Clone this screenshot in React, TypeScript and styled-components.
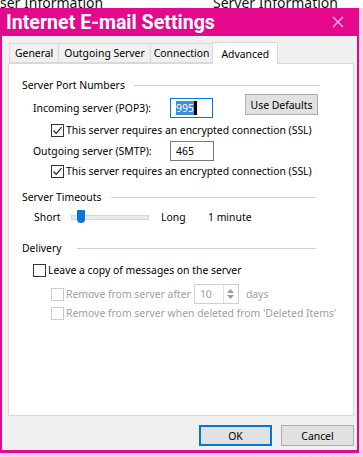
import React from "react";
import styled, { createGlobalStyle } from "styled-components";

const Global = createGlobalStyle`
  html, body { margin: 0; padding: 0; background: #ffffff; }
  body { font-family: "Noto Sans", "Open Sans", sans-serif; font-size: 10.4px; color: #000; }
  * { box-sizing: border-box; }
`;

const Page = styled.div`
  width: 363px;
  height: 457px;
  overflow: hidden;
  display: flex;
  flex-direction: column;
  background: #f6d3e7;
`;

const BackStrip = styled.div<{ $h: number; $bg: string }>`
  height: ${(p) => p.$h}px;
  flex: none;
  display: flex;
  overflow: hidden;
  background: ${(p) => p.$bg};
  font-family: "Noto Sans", sans-serif;
  font-size: 14px;
  line-height: 18px;
  color: #111;
  white-space: nowrap;
`;

const BackText = styled.span<{ $w: number; $shift: number }>`
  width: ${(p) => p.$w}px;
  flex: none;
  margin-top: ${(p) => p.$shift}px;
  height: 18px;
`;

const Window = styled.div`
  width: 359px;
  height: 445px;
  flex: none;
  display: flex;
  flex-direction: column;
  background: #e3088c;
  padding: 0 2px 3px 2px;
`;

const TitleBar = styled.div`
  height: 28px;
  flex: none;
  display: flex;
  align-items: center;
  justify-content: space-between;
  padding: 0 13px 0 4px;
  color: #fff;
  font-family: Roboto, "Noto Sans", sans-serif;
  font-size: 19.6px;
  font-weight: 700;
`;

const Body = styled.div`
  flex: 1;
  background: #f0f0f0;
  display: flex;
  flex-direction: column;
  padding: 6px 2px 0 6px;
`;

const TabRow = styled.div`
  display: flex;
  align-items: flex-end;
  height: 21px;
  padding-left: 2px;
  position: relative;
  z-index: 1;
`;

const Tab = styled.div<{ $active?: boolean; $pad: number }>`
  height: ${(p) => (p.$active ? 22 : 20)}px;
  padding: 0 ${(p) => p.$pad}px;
  margin-bottom: ${(p) => (p.$active ? -1 : 0)}px;
  display: flex;
  align-items: center;
  background: ${(p) => (p.$active ? "#ffffff" : "#f0f0f0")};
  border: 1px solid #d9d9d9;
  border-bottom: ${(p) => (p.$active ? "none" : "1px solid #d9d9d9")};
  margin-left: -1px;
  color: #000;
`;

const Panel = styled.div`
  height: 353px;
  width: 346px;
  flex: none;
  background: #fff;
  border: 1px solid #d9d9d9;
  display: flex;
  flex-direction: column;
  padding: 13px 0 0 13px;
`;

const GroupHeader = styled.div<{ $mt: number; $gap: number; $end: number }>`
  height: 16px;
  margin-top: ${(p) => p.$mt}px;
  display: flex;
  align-items: center;
  gap: ${(p) => p.$gap}px;
  padding-right: ${(p) => p.$end}px;
  &::after {
    content: "";
    flex: 1;
    height: 1px;
    background: #d0d0d0;
  }
`;

const Row = styled.div<{ $mt: number; $h: number; $indent: number }>`
  height: ${(p) => p.$h}px;
  margin-top: ${(p) => p.$mt}px;
  padding-left: ${(p) => p.$indent}px;
  display: flex;
  align-items: center;
`;

const Label = styled.span<{ $w?: number; $disabled?: boolean }>`
  ${(p) => (p.$w ? `width: ${p.$w}px; flex: none;` : "")}
  color: ${(p) => (p.$disabled ? "#a0a0a0" : "#000")};
  white-space: nowrap;
`;

const TextBox = styled.div<{ $focused?: boolean; $w: number }>`
  width: ${(p) => p.$w}px;
  height: 20px;
  flex: none;
  border: 1px solid ${(p) => (p.$focused ? "#0078d7" : "#7a7a7a")};
  display: flex;
  align-items: center;
  padding-left: 5px;
  background: #fff;
`;

const Selected = styled.span`
  background: #3c8fd8;
  color: #fff;
  line-height: 14px;
`;

const Caret = styled.span`
  width: 3px;
  height: 14px;
  background: #000;
`;

const Button = styled.div<{ $primary?: boolean; $w: number }>`
  width: ${(p) => p.$w}px;
  height: 21px;
  flex: none;
  background: #e1e1e1;
  border: ${(p) => (p.$primary ? "2px solid #0078d7" : "1px solid #adadad")};
  display: flex;
  align-items: center;
  justify-content: center;
  color: #000;
`;

const DefaultsButton = styled(Button)`
  margin-left: 32px;
  align-self: flex-start;
  margin-top: -4px;
`;

const Check = styled.div<{ $disabled?: boolean }>`
  width: 13px;
  height: 13px;
  flex: none;
  border: 1px solid ${(p) => (p.$disabled ? "#cccccc" : "#333333")};
  background: #fff;
  margin-right: 2px;
  display: flex;
  align-items: center;
  justify-content: center;
`;

const Slider = styled.div`
  width: 78px;
  height: 16px;
  flex: none;
  margin-left: 4px;
  margin-right: 12px;
  position: relative;
  display: flex;
  align-items: center;
  &::before {
    content: "";
    width: 100%;
    height: 3px;
    background: #e7eaea;
    border: 1px solid #d6d6d6;
  }
`;

const Thumb = styled.div`
  position: absolute;
  left: 6px;
  top: 1px;
  width: 8px;
  height: 13px;
  background: #0078d7;
  border-radius: 1px 1px 4px 4px;
`;

const Spinner = styled.div`
  width: 45px;
  height: 20px;
  flex: none;
  border: 1px solid #d0d0d0;
  display: flex;
  margin: 0 7px 0 3px;
  background: #fff;
`;

const SpinValue = styled.div`
  flex: 1;
  display: flex;
  align-items: center;
  padding-left: 5px;
  color: #a0a0a0;
`;

const SpinArrows = styled.div`
  width: 15px;
  border-left: 1px solid #e0e0e0;
  display: flex;
  flex-direction: column;
  justify-content: center;
  align-items: center;
  gap: 2px;
`;

const Footer = styled.div`
  display: flex;
  justify-content: flex-end;
  gap: 9px;
  padding-top: 9px;
  width: 346px;
`;

const CheckMark = () => (
  <svg width="11" height="11" viewBox="0 0 11 11">
    <path d="M1.5 5.5 L4.2 8.3 L9.6 2.2" fill="none" stroke="#222" strokeWidth="1.2" />
  </svg>
);

const Tri = ({ up }: { up?: boolean }) => (
  <svg width="7" height="4" viewBox="0 0 7 4">
    <path d={up ? "M0 4 L3.5 0 L7 4 Z" : "M0 0 L3.5 4 L7 0 Z"} fill="#9a9a9a" />
  </svg>
);

export default function App() {
  return (
    <Page>
      <Global />
      <BackStrip $h={8} $bg="#ffffff">
        <BackText $w={213} $shift={-6}>ser Information</BackText>
        <BackText $w={150} $shift={-6}>Server Information</BackText>
      </BackStrip>
      <Window>
        <TitleBar>
          <span>Internet E-mail Settings</span>
          <svg width="12" height="12" viewBox="0 0 12 12">
            <path d="M1 1 L11 11 M11 1 L1 11" stroke="#f7c6e3" strokeWidth="1.3" />
          </svg>
        </TitleBar>
        <Body>
          <TabRow>
            <Tab $pad={5}>General</Tab>
            <Tab $pad={5}>Outgoing Server</Tab>
            <Tab $pad={3}>Connection</Tab>
            <Tab $active $pad={8}>Advanced</Tab>
          </TabRow>
          <Panel>
            <GroupHeader $mt={0} $gap={9} $end={33}>Server Port Numbers</GroupHeader>
            <Row $mt={5} $h={20} $indent={11}>
              <Label $w={137}>Incoming server (POP3):</Label>
              <TextBox $focused $w={43}>
                <Selected>995</Selected>
                <Caret />
              </TextBox>
              <DefaultsButton $w={73}>Use Defaults</DefaultsButton>
            </Row>
            <Row $mt={4} $h={16} $indent={29}>
              <Check><CheckMark /></Check>
              <Label>This server requires an encrypted connection (SSL)</Label>
            </Row>
            <Row $mt={3} $h={20} $indent={11}>
              <Label $w={137}>Outgoing server (SMTP):</Label>
              <TextBox $w={44}>465</TextBox>
            </Row>
            <Row $mt={2} $h={16} $indent={29}>
              <Check><CheckMark /></Check>
              <Label>This server requires an encrypted connection (SSL)</Label>
            </Row>
            <GroupHeader $mt={10} $gap={10} $end={37}>Server Timeouts</GroupHeader>
            <Row $mt={4} $h={16} $indent={12}>
              <Label $w={33}>Short</Label>
              <Slider>
                <Thumb />
              </Slider>
              <Label $w={47}>Long</Label>
              <Label>1 minute</Label>
            </Row>
            <GroupHeader $mt={15} $gap={15} $end={37}>Delivery</GroupHeader>
            <Row $mt={6} $h={16} $indent={11}>
              <Check />
              <Label>Leave a copy of messages on the server</Label>
            </Row>
            <Row $mt={6} $h={20} $indent={29}>
              <Check $disabled />
              <Label $disabled>Remove from server after</Label>
              <Spinner>
                <SpinValue>10</SpinValue>
                <SpinArrows>
                  <Tri up />
                  <Tri />
                </SpinArrows>
              </Spinner>
              <Label $disabled>days</Label>
            </Row>
            <Row $mt={1} $h={16} $indent={29}>
              <Check $disabled />
              <Label $disabled>Remove from server when deleted from 'Deleted Items'</Label>
            </Row>
          </Panel>
          <Footer>
            <Button $primary $w={73}>OK</Button>
            <Button $w={73}>Cancel</Button>
          </Footer>
        </Body>
      </Window>
      <BackStrip $h={4} $bg="#f6d3e7">
        <BackText $w={245} $shift={0}></BackText>
        <BackText $w={118} $shift={0}>ØERIIIIØØØØØØØØØØØ</BackText>
      </BackStrip>
    </Page>
  );
}
